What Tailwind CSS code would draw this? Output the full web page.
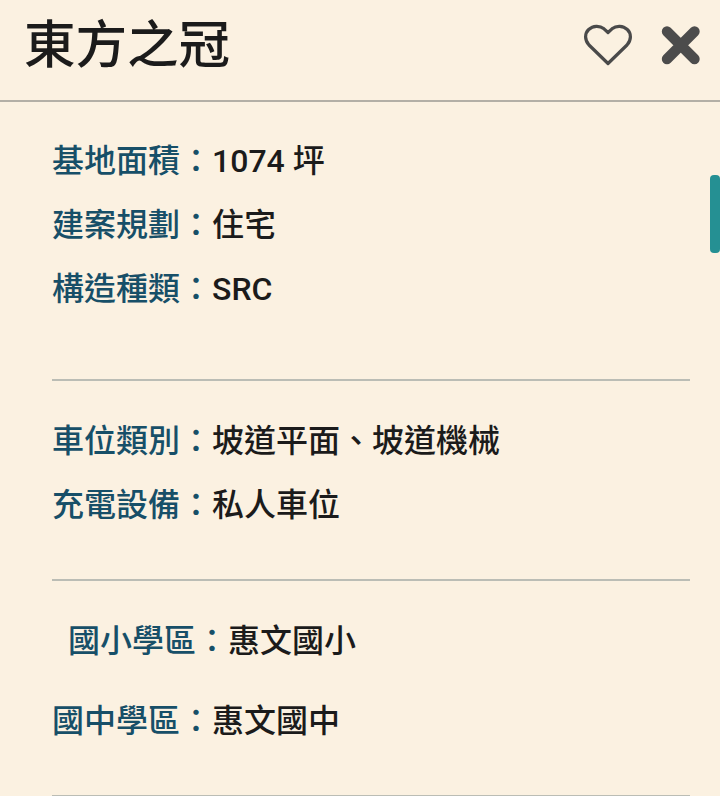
<!DOCTYPE html>
<html lang="zh-Hant">
<head>
    <meta charset="UTF-8">
    <meta name="viewport" content="width=device-width, initial-scale=1.0">
    <title>東方之冠</title>
    <script src="https://cdn.jsdelivr.net/npm/@tailwindcss/browser@4"></script>
</head>
<body class="relative h-[796px] overflow-hidden bg-[#fbf1e1] font-['Roboto','Noto_Sans_CJK_TC',sans-serif] font-medium text-[#1b1b1b]">

    <!-- Header -->
    <header class="flex h-[102px] items-start justify-between border-b-2 border-[#b3afa6] pl-6 pr-[19px]">
        <h1 class="mt-[8px] text-[51.5px] leading-[75px]">東方之冠</h1>
        <div class="mt-[24px] flex items-start gap-[28px]">
            <svg class="h-[43px] w-[50px]" viewBox="0 0 50 43" fill="none" stroke="#4a4a4a" stroke-width="3.2" stroke-linejoin="round">
                <path d="M25 39.500 L6 21 C1.500 16 1.500 9.500 5.700 5.500 C10 1.500 16.500 1.200 21 4.800 L25 8.500 L29 4.800 C33.500 1.200 40 1.500 44.300 5.500 C48.500 9.500 48.500 16 44 21 Z"/>
            </svg>
            <svg class="h-[43px] w-[40px]" viewBox="0 0 40 43" stroke="#4c4c4c" stroke-width="10.4" stroke-linecap="round">
                <path d="M6 7.500 L33.500 35 M33.500 7.500 L6 35"/>
            </svg>
        </div>
    </header>

    <!-- Details -->
    <main class="ml-[52px] mr-[30px] text-[32px] leading-[64px]">
        <section class="h-[279px] border-b-2 border-[#bbbdb5] pt-[27px]">
            <p><span class="text-[#174f68]">基地面積：</span>1074 坪</p>
            <p><span class="text-[#174f68]">建案規劃：</span>住宅</p>
            <p><span class="text-[#174f68]">構造種類：</span>SRC</p>
        </section>
        <section class="h-[200px] border-b-2 border-[#bbbdb5] pt-[28px]">
            <p><span class="text-[#174f68]">車位類別：</span>坡道平面、坡道機械</p>
            <p><span class="text-[#174f68]">充電設備：</span>私人車位</p>
        </section>
        <section class="h-[216px] border-b-2 border-[#bbbdb5] pt-[28px]">
            <p class="mb-4 pl-4"><span class="text-[#174f68]">國小學區：</span>惠文國小</p>
            <p><span class="text-[#174f68]">國中學區：</span>惠文國中</p>
        </section>
    </main>

    <!-- Scroll thumb -->
    <div class="absolute right-0 top-[175px] h-[78px] w-[10px] rounded-[4px] bg-[#259093]"></div>

</body>
</html>
